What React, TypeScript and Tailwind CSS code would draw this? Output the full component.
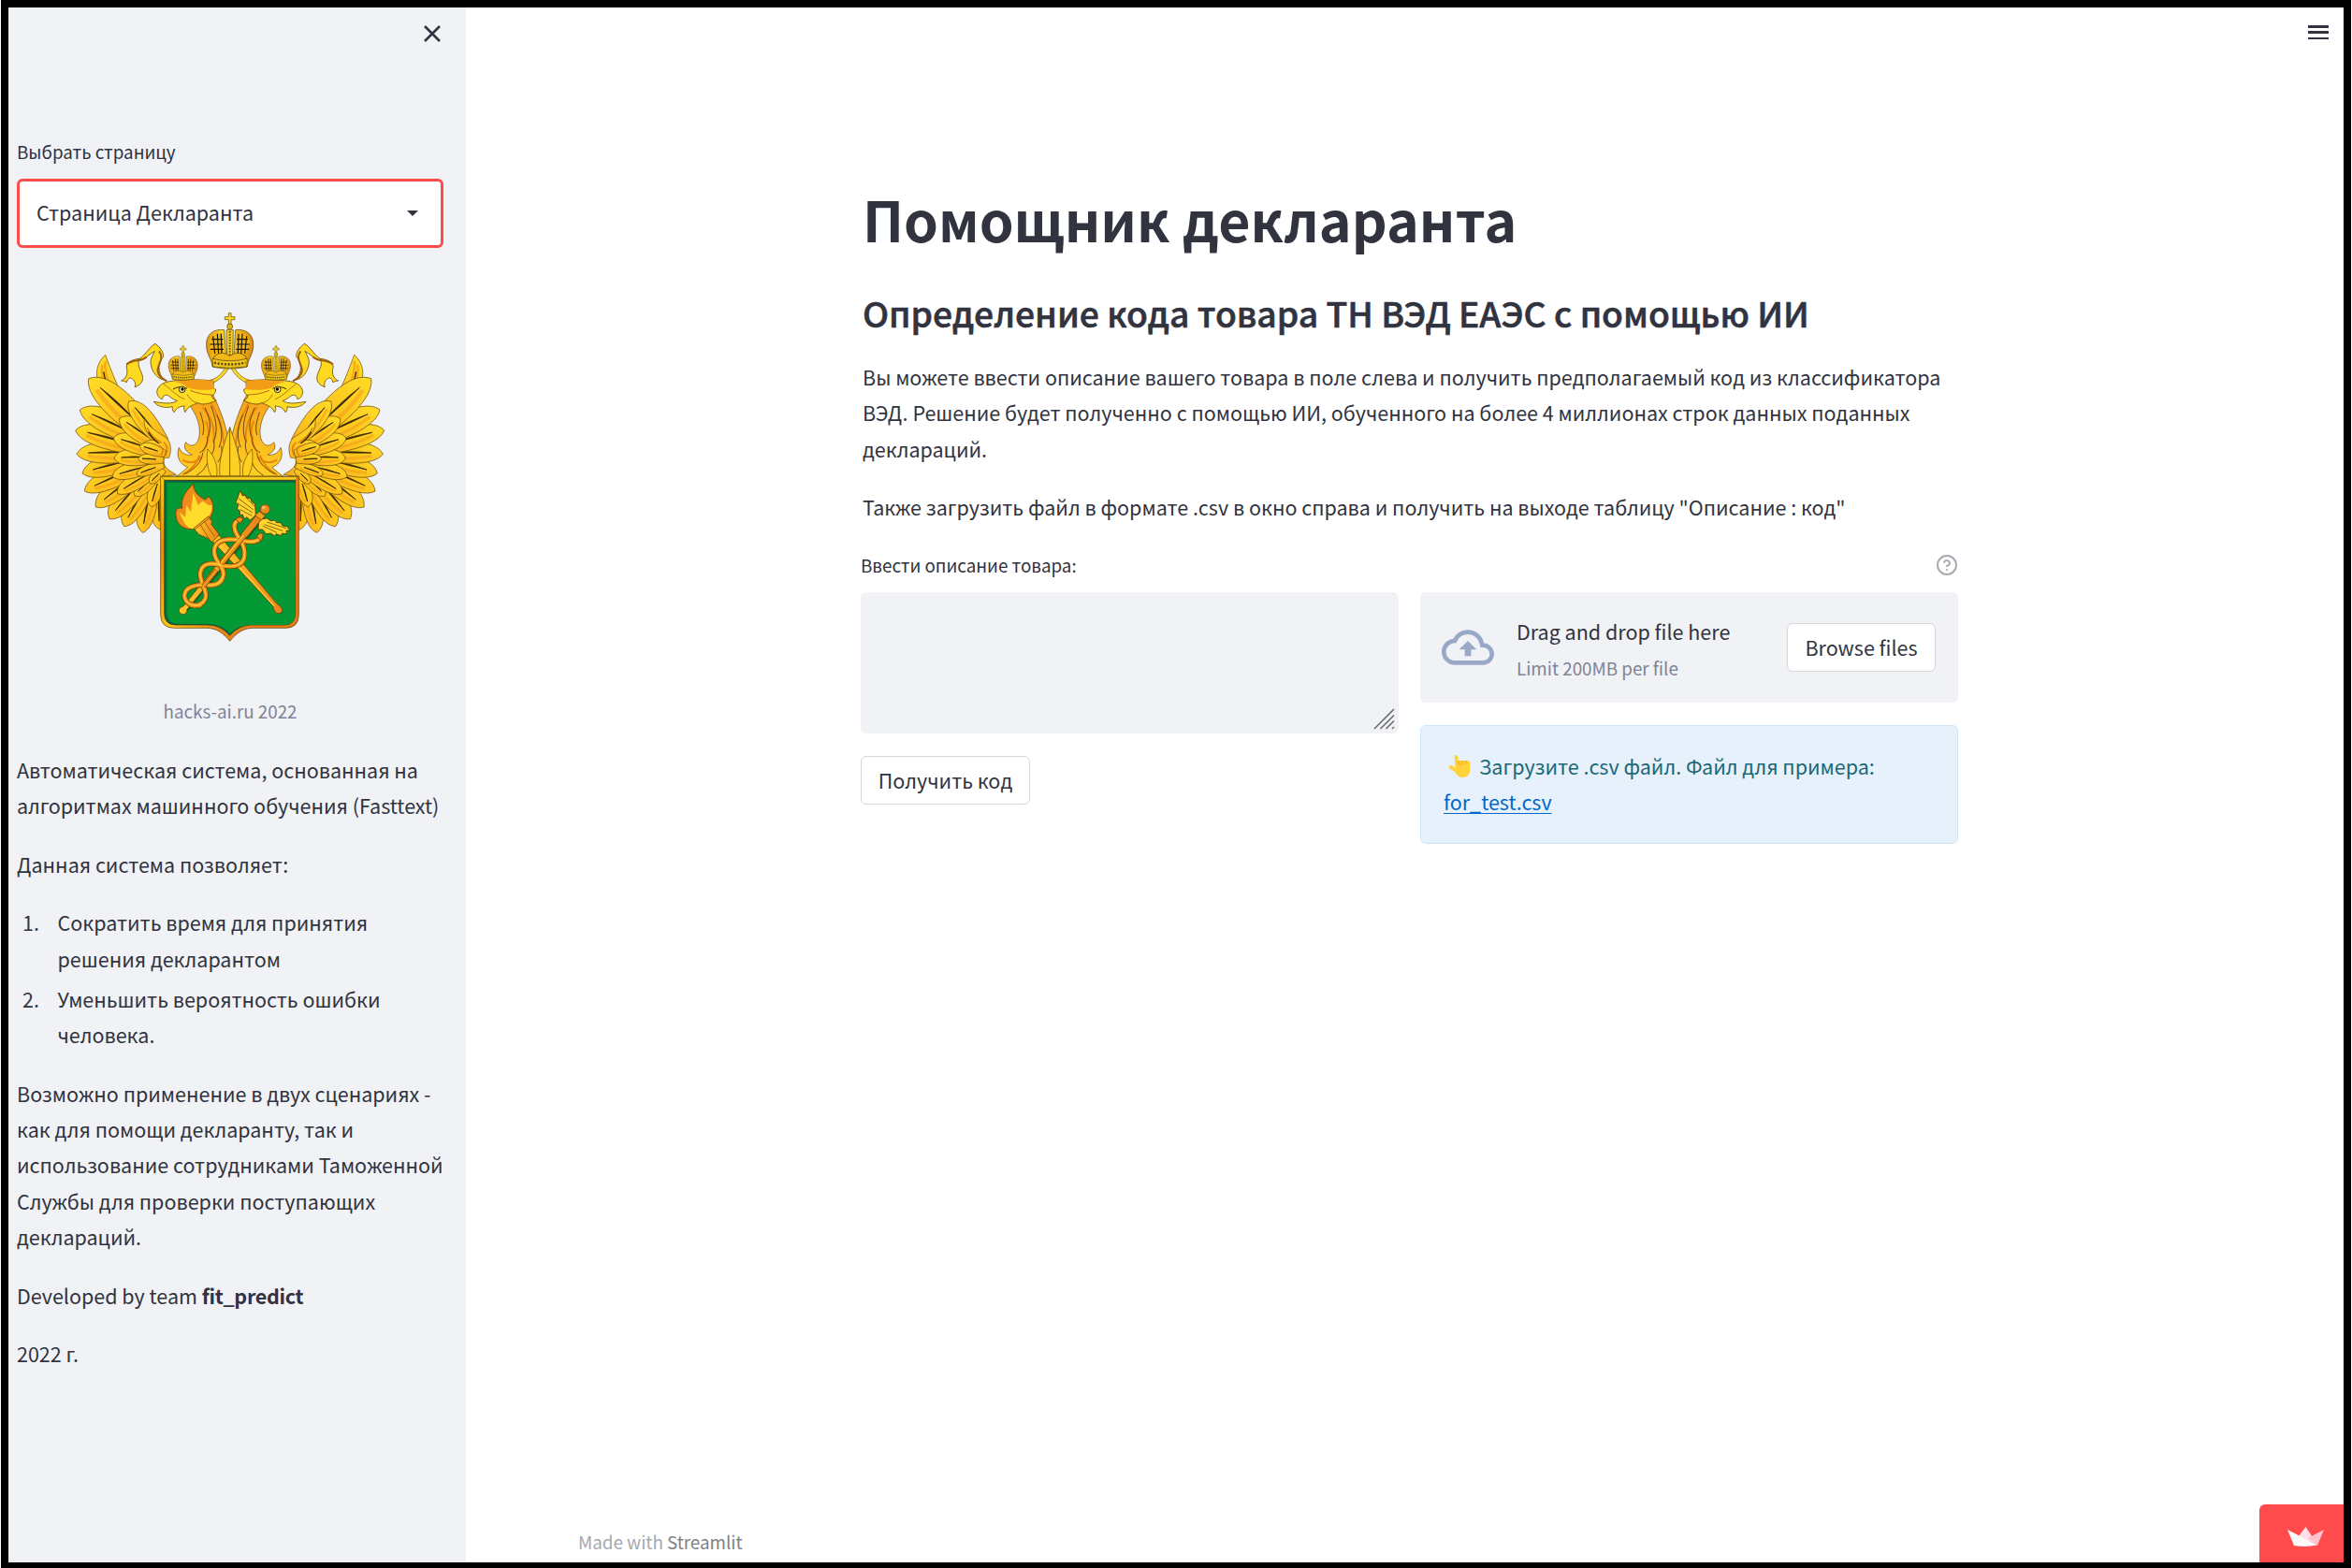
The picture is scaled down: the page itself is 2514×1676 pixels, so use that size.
import React from "react";

const INK = "#3a2a05";

/** Leaf-shaped feather running from its root (bx, by) to its tip (tx, ty). */
function Feather({ p }: { p: number[] }) {
  const [bx, by, tx, ty, w] = p;
  const dx = tx - bx;
  const dy = ty - by;
  const len = Math.hypot(dx, dy);
  const nx = (-dy / len) * w;
  const ny = (dx / len) * w;
  const at = (t: number, s: number) =>
    `${(bx + dx * t + nx * s).toFixed(1)} ${(by + dy * t + ny * s).toFixed(1)}`;
  return (
    <g>
      <path
        d={`M${at(0, 0.6)} C${at(0.4, 1.1)} ${at(0.88, 1.5)} ${at(1, 0)} C${at(0.88, -1.2)} ${at(0.4, -1.1)} ${at(0, -0.6)} Z`}
        fill="url(#plume)"
        stroke="#6b4a08"
        strokeWidth="2.2"
      />
      <path
        d={`M${at(0.2, -0.5)} Q${at(0.6, -0.6)} ${at(0.85, -0.2)}`}
        stroke="#f39c18"
        strokeWidth={w * 0.28}
        fill="none"
        opacity="0.55"
      />
      <path
        d={`M${at(0.3, 0.05)} Q${at(0.6, 0.22)} ${at(0.84, 0.08)} Q${at(0.6, 0)} ${at(0.3, 0.05)}`}
        stroke={INK}
        strokeWidth="2.4"
        fill={INK}
      />
    </g>
  );
}

const PRIMARIES = [
  [330, 600, 333, 768, 28],
  [310, 600, 278, 778, 30],
  [310, 590, 218, 758, 32],
  [300, 580, 171, 734, 34],
  [300, 560, 127, 696, 33],
  [300, 550, 91, 645, 32],
  [300, 530, 84, 588, 33],
  [300, 520, 66, 526, 34],
  [300, 510, 62, 450, 36],
  [310, 490, 76, 384, 38],
  [320, 480, 104, 284, 46],
];

const COVERTS = [
  [335, 590, 305, 695, 22],
  [330, 580, 252, 660, 23],
  [330, 570, 196, 652, 25],
  [330, 555, 180, 598, 25],
  [330, 535, 186, 540, 27],
  [335, 520, 184, 474, 29],
  [335, 500, 203, 412, 31],
  [345, 490, 233, 357, 31],
];

const SMALL_COVERTS = [
  [345, 575, 300, 620, 15],
  [345, 560, 258, 592, 16],
  [345, 545, 263, 541, 16],
  [350, 525, 268, 500, 18],
];

const NECK_STROKES =
  "M462 392 C468 415 478 435 470 465 M478 378 C490 410 500 430 488 470 M497 372 C510 410 520 440 508 480 M515 400 C530 430 538 470 522 505 M484 470 C488 490 480 510 460 522 M505 480 C512 510 500 530 486 545 M530 500 C534 525 528 540 518 552 M470 522 C468 550 445 575 412 590 M488 545 C482 570 465 585 450 594";

function Wing() {
  return (
    <g>
      <path d="M158 208 C122 240 120 290 160 340 L300 480 L290 440 C240 410 195 310 158 208Z" fill="url(#plume)" stroke="#6b4a08" strokeWidth="2" />
      <path d="M158 228 C150 280 190 350 235 395 M148 240 C138 290 180 360 235 410" stroke="#f08a12" strokeWidth="8" fill="none" opacity="0.55" />
      <path d="M152 262 C160 310 190 355 225 388" stroke={INK} strokeWidth="4" fill="none" />
      {PRIMARIES.map((p, i) => (
        <Feather key={i} p={p} />
      ))}
      {COVERTS.map((p, i) => (
        <Feather key={i} p={p} />
      ))}
      <path d="M282 412 C280 445 300 475 318 482 C290 478 280 490 270 500 L345 598 L385 592 C365 580 345 570 345 550 C340 538 355 538 362 538 C372 510 368 480 345 468 C315 450 295 435 282 412Z" fill="url(#plume)" stroke="#6b4a08" strokeWidth="2" />
      {SMALL_COVERTS.map((p, i) => (
        <Feather key={i} p={p} />
      ))}
      <path d="M292 442 C302 465 320 480 338 490 M345 488 C358 500 360 515 350 532 M330 500 C345 505 345 520 335 530" stroke="#d9780f" strokeWidth="4" fill="none" />
      <path d="M296 455 C306 475 320 485 330 492" stroke={INK} strokeWidth="4" fill="none" />
    </g>
  );
}

/** Crown with a cross, drawn around its centre so that one shape serves all three sizes. */
function Crown({ x, y, s }: { x: number; y: number; s: number }) {
  return (
    <g transform={`translate(${x} ${y}) scale(${s})`} stroke="#4f3c08" strokeWidth="2">
      <path d="M-4 -124 H4 V-112 H16 V-103 H4 V-86 H-4 V-103 H-16 V-112 H-4Z" fill="#ffd91f" />
      <circle cx="0" cy="-81" r="9" fill="#e8b510" />
      <path d="M-56 48 C-58 20 -78 8 -75 -30 C-72 -62 -45 -74 -18 -70 L-12 20 L12 20 L18 -70 C45 -74 72 -62 75 -30 C78 8 58 20 56 48 C25 56 -25 56 -56 48Z" fill="url(#crown)" />
      <path d="M-66 -28 C-60 -55 -35 -62 -24 -58 L-20 10 L-52 8Z M66 -28 C60 -55 35 -62 24 -58 L20 10 L52 8Z" fill="#f0b41a" stroke="none" />
      <path
        d="M-64 -24 L-22 -24 M-62 -8 H-20 M-58 -40 H-22 M-54 -50 L-48 6 M-40 -58 L-36 8 M-28 -58 L-26 8 M64 -24 H22 M62 -8 H20 M58 -40 H22 M54 -50 L48 6 M40 -58 L36 8 M28 -58 L26 8"
        stroke="#1c1503"
        strokeWidth="3.5"
        fill="none"
      />
      <path d="M-11 -70 H11 L9 20 H-9Z" fill="#f5cf1d" />
      <path d="M0 -66 V16" stroke="#7a5a08" strokeWidth="6" strokeDasharray="5 4" />
      <path d="M-50 14 Q-25 -6 0 14 Q25 -6 50 14 L54 28 Q0 36 -54 28Z" fill="#f2b817" />
      <path d="M-56 22 Q0 36 56 22 L54 48 Q0 56 -54 48Z" fill="#edc51c" />
      <path d="M-50 35 Q0 46 50 35" fill="none" stroke="#5d4508" strokeWidth="7" strokeDasharray="6 5" />
    </g>
  );
}

function EagleHalf() {
  return (
    <g>
      <Wing />
      <path d="M490 290 C515 285 530 270 545 246 L557 238 C552 262 525 290 498 300Z" fill="#ffdb22" stroke="#6b4a08" strokeWidth="2" />
      <path d="M345 288 C325 285 305 262 303 232 C302 220 310 210 316 196 C300 205 285 222 265 226 C258 250 285 270 276 292 C272 302 262 308 252 311 C256 302 254 296 248 288 C240 280 232 278 226 296 C220 292 215 291 209 291 C222 286 232 270 226 250 C222 232 245 222 268 220 C290 205 300 180 318 172 C335 185 345 200 344 214 C325 230 325 265 345 288Z" fill="#ffd91f" stroke="#6b4a08" strokeWidth="2.5" />
      <path d="M226 238 C250 220 275 232 290 214 M330 196 C350 220 322 240 326 262 C330 278 340 285 355 292" stroke="#9a5b0d" strokeWidth="6" fill="none" />
      <path d="M500 330 C530 390 546 440 557 500 V598 H385 C398 590 410 578 422 568 C395 560 384 532 394 505 C402 525 420 532 436 528 C412 518 408 502 416 488 C430 506 452 500 458 474 C466 440 452 400 425 366Z" fill="url(#neck)" stroke="#6b4a08" strokeWidth="2" />
      <path d="M470 375 C500 410 510 450 505 490 M495 360 C530 420 535 460 540 510 M480 420 C495 450 490 490 470 520 M460 530 C450 560 430 580 405 592 M405 545 C430 560 455 550 465 535" stroke="#e8860f" strokeWidth="6" fill="none" />
      <path d={NECK_STROKES} stroke="#5f4206" strokeWidth="2.8" fill="none" />
      <path d="M557 440 C535 500 520 550 525 597 H557Z" fill="#ffd024" stroke="#6b4a08" strokeWidth="2" />
      <path d="M486 510 C480 550 488 580 498 597 H515 C520 560 505 530 486 510Z" fill="#ffd024" stroke="#6b4a08" strokeWidth="2" />
      <path d="M370 292 C345 295 325 305 323 328 C326 342 332 348 340 350 C343 336 352 334 362 340 C372 348 380 353 388 355 C370 368 340 362 313 358 C325 374 350 380 373 374 C372 382 374 390 379 392 C384 378 400 372 412 372 C408 380 410 386 414 392 C420 374 440 368 455 362 C470 370 490 365 514 354 C505 352 500 346 499 338 C506 336 512 330 512 318 C505 316 502 314 506 292 C470 286 410 286 370 292Z" fill="#ffdc24" stroke="#6b4a08" strokeWidth="2.5" />
      <path d="M506 292 C470 286 410 286 378 294 C400 298 415 304 418 312 C445 322 485 322 512 318 C502 312 503 302 506 292Z" fill="#f29c18" />
      <path d="M430 322 C455 332 480 336 500 336 M420 335 C430 350 440 360 455 362" stroke="#b8690c" strokeWidth="3" fill="none" />
      <path d="M375 318 Q395 305 420 316" stroke={INK} strokeWidth="3" fill="none" />
      <circle cx="404" cy="319" r="10" fill="#f8e6a0" stroke={INK} strokeWidth="3" />
      <circle cx="405" cy="318" r="5" fill="#000" />
      <path d="M345 302 C365 315 385 340 412 350" stroke="#a2660d" strokeWidth="2.5" fill="none" />
    </g>
  );
}

function Emblem() {
  return (
    <svg viewBox="0 0 1110 1170" className="h-full w-full">
      <defs>
        <linearGradient id="plume" x1="0" y1="0" x2="1" y2="1">
          <stop offset="0" stopColor="#ffdc26" />
          <stop offset="0.55" stopColor="#fcc41f" />
          <stop offset="1" stopColor="#f7ac1c" />
        </linearGradient>
        <linearGradient id="neck" x1="0" y1="0" x2="0" y2="1">
          <stop offset="0" stopColor="#f5a01c" />
          <stop offset="1" stopColor="#ffcf22" />
        </linearGradient>
        <linearGradient id="crown" x1="0" y1="0" x2="1" y2="0">
          <stop offset="0" stopColor="#e3940f" />
          <stop offset="0.3" stopColor="#fbd322" />
          <stop offset="0.6" stopColor="#f5c01b" />
          <stop offset="1" stopColor="#d9890e" />
        </linearGradient>
        <linearGradient id="frame" x1="0" y1="0" x2="1" y2="0.6">
          <stop offset="0" stopColor="#ffd21e" />
          <stop offset="0.2" stopColor="#e88a12" />
          <stop offset="0.45" stopColor="#ffc21c" />
          <stop offset="0.7" stopColor="#e8861a" />
          <stop offset="1" stopColor="#e27a18" />
        </linearGradient>
        <linearGradient id="rod" x1="0" y1="0" x2="1" y2="0">
          <stop offset="0" stopColor="#ffc825" />
          <stop offset="1" stopColor="#e8841a" />
        </linearGradient>
      </defs>
      <EagleHalf />
      <g transform="translate(1114 0) scale(-1 1)">
        <EagleHalf />
      </g>
      <Crown x={557} y={198} s={1} />
      <Crown x={407} y={256} s={0.62} />
      <Crown x={705} y={256} s={0.62} />
      <path d="M335 597 H778 V1040 Q778 1084 735 1084 H632 C600 1084 578 1100 557 1126 C536 1100 514 1084 482 1084 H380 Q335 1084 335 1040Z" fill="url(#frame)" stroke="#4f3c08" strokeWidth="2" />
      <path d="M338 599 H776 L766 610 H348Z" fill="#ffd020" stroke="#4f3c08" strokeWidth="1.5" />
      <path d="M347 610 H767 V1036 Q767 1074 730 1074 H628 C598 1074 574 1088 557 1108 C540 1088 516 1074 486 1074 H384 Q347 1074 347 1036Z" fill="#006b45" stroke="#3d3205" strokeWidth="2" />
      <path d="M355 618 H767 V1036 Q767 1074 730 1074 H628 C598 1074 574 1084 557 1102 C545 1085 520 1070 486 1070 H390 Q355 1068 355 1030Z" fill="#039a35" />
      <g strokeLinecap="round" fill="none" transform="translate(6 5)" stroke="#04602a" opacity="0.75">
        <path d="M490 775 L712 1025" strokeWidth="16" />
        <path d="M406 1025 L655 725" strokeWidth="16" />
      </g>
      <path d="M440 622 C420 640 398 665 404 700 C388 695 382 705 384 725 C388 755 410 770 445 766 L495 728 C510 705 505 675 488 662 C485 668 478 672 476 672 C455 660 440 645 440 622Z" fill="#f08c1c" stroke="#7a3d05" strokeWidth="2.5" />
      <path d="M440 650 L455 690 L470 676 L488 690 L500 690 C500 715 490 728 470 740 L440 766 C420 765 410 750 395 712 L414 728 L418 690 L432 712Z" fill="#ffdc2a" />
      <path d="M441 764 L488 726 L500 742 L498 752 L522 782 L516 798 L500 808 L486 796 L458 784Z" fill="url(#rod)" stroke="#7a3d05" strokeWidth="2.5" />
      <path d="M462 752 L492 800 M475 742 L508 790 M444 768 L490 732" stroke="#a9580c" strokeWidth="3" />
      <path d="M502 806 L522 786 L708 1006 Q726 1016 726 1030 Q718 1042 706 1036 Q696 1026 696 1014Z" fill="url(#rod)" stroke="#7a3d05" strokeWidth="2.5" />
      <path d="M511 804 L700 1014" stroke="#ffcb3a" strokeWidth="4" />
      <path d="M590 643 L598 660 L606 656 L612 668 L622 666 L628 680 L638 686 L640 722 L622 738 L612 728 L604 734 L598 720 L590 722 L588 706 L580 704 L584 688 L576 680 L582 666Z" fill="#ffd62e" stroke="#5f4206" strokeWidth="3" />
      <path d="M650 736 L676 732 L688 740 L700 738 L708 746 L720 746 L726 756 L740 758 L750 770 L738 772 L740 782 L724 780 L722 788 L706 782 L700 788 L688 780 L674 782 L662 768 L648 768Z" fill="#ffd62e" stroke="#5f4206" strokeWidth="3" />
      <path d="M584 668 L632 704 M582 684 L630 714 M590 704 L628 724 M598 652 L636 694 M738 764 L676 744 M726 772 L668 752 M708 778 L662 756" stroke="#7a560a" strokeWidth="2.6" fill="none" />
      <path d="M408 1014 L642 722 L658 736 L420 1024 Q420 1040 406 1040 Q392 1036 394 1024 Q398 1016 408 1014Z" fill="url(#rod)" stroke="#7a3d05" strokeWidth="2.5" />
      <path d="M638 722 L652 710 L670 724 L658 738Z" fill="#f5a01c" stroke="#7a3d05" strokeWidth="2" />
      <circle cx="670" cy="703" r="15" fill="#ee8a1e" stroke="#7a3d05" strokeWidth="2" />
      <circle cx="665" cy="697" r="5" fill="#ffc060" />
      {[
        { c: "#6b3a05", w: 17 },
        { c: "#f0951c", w: 13 },
        { c: "#ffc93a", w: 4 },
      ].map(({ c, w }) => (
        <g key={w} stroke={c} strokeWidth={w} fill="none" strokeLinecap="round">
          <path d="M655 795 C640 812 615 808 595 803 C555 796 510 796 507 835 C505 875 540 880 536 915 C530 945 505 948 485 946 C445 942 408 955 412 985 C418 1010 445 1016 462 1010" />
          <path d="M590 735 C566 742 568 765 580 785 C597 810 610 832 602 862 C592 890 560 888 535 884 C495 872 466 875 462 908 C460 940 488 962 478 990 C470 1010 448 1015 430 1008" />
        </g>
      ))}
      <path d="M575 735 Q590 722 600 735 L590 748Z M644 790 Q655 772 664 785 L658 806Z" fill="#f0951c" stroke="#6b3a05" strokeWidth="2.5" />
      <path d="M530 878 L604 787" stroke="#6b3a05" strokeWidth="16" />
      <path d="M530 878 L604 787" stroke="#f0951c" strokeWidth="12" />
      <path d="M528 874 L601 784" stroke="#ffc93a" strokeWidth="4" />
      <path d="M472 950 L514 898" stroke="#6b3a05" strokeWidth="15" />
      <path d="M472 950 L514 898" stroke="#f0951c" strokeWidth="11" />
    </svg>
  );
}

function PointingHand() {
  return (
    <svg viewBox="0 0 24 24" className="mr-[9px] ml-[5px] h-6 w-6 shrink-0">
      <path d="M6.5 2 Q6.5 0 8.2 0 Q10 0 10.3 2 L11 6 H21 Q23.5 6.5 23.5 10 V14 C23.5 20 21 24 15.5 24 C11 24 9.5 21.5 7 18 L2 15 Q0 13.5 0.6 12 Q1.5 10.5 4 11.5 L7.8 13.2Z" fill="#ffd23c" />
      <path d="M11 6 V9 M15 6 V10 M19 6 V9.5 M10.8 9.5 L13 10.5" stroke="#f0a31c" strokeWidth="1.1" fill="none" />
    </svg>
  );
}

const bodyText = "text-[21.5px] leading-[38.4px] whitespace-nowrap";

function Lines({ lines }: { lines: React.ReactNode[] }) {
  return (
    <div className={bodyText}>
      {lines.map((l, i) => (
        <div key={i}>{l}</div>
      ))}
    </div>
  );
}

function Sidebar() {
  return (
    <aside className="flex w-[489px] shrink-0 flex-col bg-[#f0f2f6] pr-[24px] pl-[9px]">
      <div className="flex h-[56px] justify-end pt-[16px]">
        <svg viewBox="0 0 24 24" className="h-6 w-6" stroke="#31333f" strokeWidth="2.6" fill="none">
          <path d="M4 4 L20 20 M20 4 L4 20" />
        </svg>
      </div>
      <div className="mt-[81px] h-[46px] text-[18.8px] leading-[34px] whitespace-nowrap">Выбрать страницу</div>
      <div className="flex h-[74px] shrink-0 items-center justify-between rounded-[6px] border-[3px] border-[#ff4b4b] bg-white pr-[24px] pl-[18px] text-[21.5px]">
        <span className="-mt-px">Страница Декларанта</span>
        <svg viewBox="0 0 12 6" className="h-[6px] w-[12px]">
          <path d="M0 0 H12 L6 6Z" fill="#31333f" />
        </svg>
      </div>
      <div className="mt-[45px] mr-[2px] flex h-[390px] w-[454px] shrink-0 justify-center">
        <Emblem />
      </div>
      <div className="mt-[43px] h-[34px] text-center text-[18.8px] leading-[34px] text-[#808495]">hacks-ai.ru 2022</div>
      <div className="mt-[27px] flex flex-col gap-6">
        <Lines lines={["Автоматическая система, основанная на", "алгоритмах машинного обучения (Fasttext)"]} />
        <Lines lines={["Данная система позволяет:"]} />
        <ol className="flex flex-col gap-[4.8px]">
          <li className="flex">
            <span className={`${bodyText} w-[43.5px] pl-[6px]`}>1.</span>
            <Lines lines={["Сократить время для принятия", "решения декларантом"]} />
          </li>
          <li className="flex">
            <span className={`${bodyText} w-[43.5px] pl-[6px]`}>2.</span>
            <Lines lines={["Уменьшить вероятность ошибки", "человека."]} />
          </li>
        </ol>
        <Lines
          lines={[
            "Возможно применение в двух сценариях -",
            "как для помощи декларанту, так и",
            "использование сотрудниками Таможенной",
            "Службы для проверки поступающих",
            "деклараций.",
          ]}
        />
        <Lines
          lines={[
            <>
              Developed by team <b className="font-bold tracking-[-0.3px]">fit_predict</b>
            </>,
          ]}
        />
        <Lines lines={["2022 г."]} />
      </div>
    </aside>
  );
}

function Main() {
  return (
    <main className="flex min-w-0 flex-1 flex-col">
      <header className="flex h-[56px] shrink-0 justify-end pt-[19px] pr-[16px]">
        <div className="flex h-[15px] w-[22px] flex-col justify-between">
          <div className="h-[2.5px] bg-[#31333f]" />
          <div className="h-[2.5px] bg-[#31333f]" />
          <div className="h-[2.5px] bg-[#31333f]" />
        </div>
      </header>
      <section className="ml-[422px] flex w-[1173px] flex-1 flex-col">
        <h1 className="mt-[130px] ml-[2px] h-[80px] text-[59px] leading-[80px] font-bold whitespace-nowrap">Помощник декларанта</h1>
        <h3 className="mt-[35px] ml-[2px] h-[50px] text-[37.25px] leading-[50px] font-medium whitespace-nowrap [-webkit-text-stroke:0.6px_#31333f]">
          Определение кода товара ТН ВЭД ЕАЭС с помощью ИИ
        </h3>
        <div className="mt-[25px] ml-[2px] flex flex-col gap-6">
          <Lines
            lines={[
              "Вы можете ввести описание вашего товара в поле слева и получить предполагаемый код из классификатора",
              "ВЭД. Решение будет полученно с помощью ИИ, обученного на более 4 миллионах строк данных поданных",
              "деклараций.",
            ]}
          />
          <Lines lines={['Также загрузить файл в формате .csv в окно справа и получить на выходе таблицу "Описание : код"']} />
        </div>
        <div className="mt-[25.4px] flex gap-[23px]">
          <div className="w-[575px]">
            <div className="h-[46px] text-[18.8px] leading-[34px] whitespace-nowrap">Ввести описание товара:</div>
            <div className="flex h-[151px] items-end justify-end rounded-[6px] bg-[#f0f2f6] p-[4px]">
              <svg viewBox="0 0 23 23" className="h-[23px] w-[23px]" stroke="#6b6c70" strokeWidth="1.6">
                <path d="M1 22 L22 1 M7.5 22 L22 7.5 M13.5 22 L22 13.5 M20 22 L22 20" />
              </svg>
            </div>
            <div className="mt-[24px] flex h-[52px] w-[181px] items-center justify-center rounded-[6px] border border-[#d6d6d9] text-[21.5px] whitespace-nowrap">
              Получить код
            </div>
          </div>
          <div className="w-[575px]">
            <div className="flex h-[46px] justify-end pt-[5px]">
              <svg viewBox="0 0 24 24" className="h-6 w-6" fill="none" stroke="#a9aab1" strokeWidth="2" strokeLinecap="round">
                <circle cx="12" cy="12" r="10" />
                <path d="M9.1 9 a3 3 0 0 1 5.8 1 c0 2-3 3-3 3 M12 17 h.01" />
              </svg>
            </div>
            <div className="flex h-[118px] items-center rounded-[6px] bg-[#f0f2f6] pr-[24px] pl-[23px]">
              <svg viewBox="0 0 24 24" className="h-[56px] w-[56px]" fill="#9aa8c7">
                <path d="M19.35 10.04A7.49 7.49 0 0 0 12 4C9.11 4 6.6 5.64 5.35 8.04A5.994 5.994 0 0 0 0 14c0 3.31 2.69 6 6 6h13c2.76 0 5-2.24 5-5 0-2.64-2.05-4.78-4.65-4.96zM19 18H6c-2.21 0-4-1.79-4-4 0-2.05 1.53-3.76 3.56-3.97l1.07-.11.5-.95A5.469 5.469 0 0 1 12 6c2.62 0 4.88 1.86 5.39 4.43l.3 1.5 1.53.11A2.98 2.98 0 0 1 22 15c0 1.65-1.35 3-3 3zM8 13h2.55v3h2.9v-3H16l-4-4z" />
              </svg>
              <div className="ml-[24px] flex-1 pt-[5px] whitespace-nowrap">
                <div className="text-[21.5px] leading-[38.4px]">Drag and drop file here</div>
                <div className="text-[18.8px] leading-[38.4px] text-[#808495]">Limit 200MB per file</div>
              </div>
              <div className="flex h-[52px] w-[159px] items-center justify-center rounded-[6px] border border-[#d6d6d9] bg-white text-[21.5px] whitespace-nowrap">
                Browse files
              </div>
            </div>
            <div className="mt-[24px] h-[127px] rounded-[6px] border border-[#cfe6f9] bg-[#e7f1fb] pt-[24px] pl-[24px] text-[21.5px] leading-[38.4px] whitespace-nowrap text-[#1b6877]">
              <div className="flex items-center">
                <PointingHand />
                <span>Загрузите .csv файл. Файл для примера:</span>
              </div>
              <a className="text-[#0068c9] underline decoration-1 underline-offset-[3px]">for_test.csv</a>
            </div>
          </div>
        </div>
      </section>
      <footer className="flex h-[62px] shrink-0 items-end justify-between">
        <div className="ml-[120px] pb-[7px] text-[18.8px] leading-[31px] whitespace-nowrap text-[#a6a7ae]">
          Made with <span className="text-[#808287]">Streamlit</span>
        </div>
        <div className="flex h-[62px] w-[90px] justify-center rounded-tl-[6px] bg-[#ff4b4b] pt-[24px] pl-[9px]">
          <svg viewBox="0 0 39 21" className="h-[21px] w-[39px]">
            <path d="M19.5 0 L32 19 L12 10Z" fill="#ffe0e8" />
            <path d="M39 3 L32 20 L22 12Z" fill="#ffc2ce" />
            <path d="M0 3 L32 19.5 Q19 22 7 20Z" fill="#fffafa" />
          </svg>
        </div>
      </footer>
    </main>
  );
}

export default function App() {
  return (
    <div className="flex h-[1676px] w-[2514px] border-x border-white bg-black pt-[8px] pr-[8px] pb-[6px] pl-[8px] font-['Noto_Sans_CJK_SC','Noto_Sans',sans-serif] text-[#31333f]">
      <div className="flex flex-1 bg-white">
        <Sidebar />
        <Main />
      </div>
    </div>
  );
}
